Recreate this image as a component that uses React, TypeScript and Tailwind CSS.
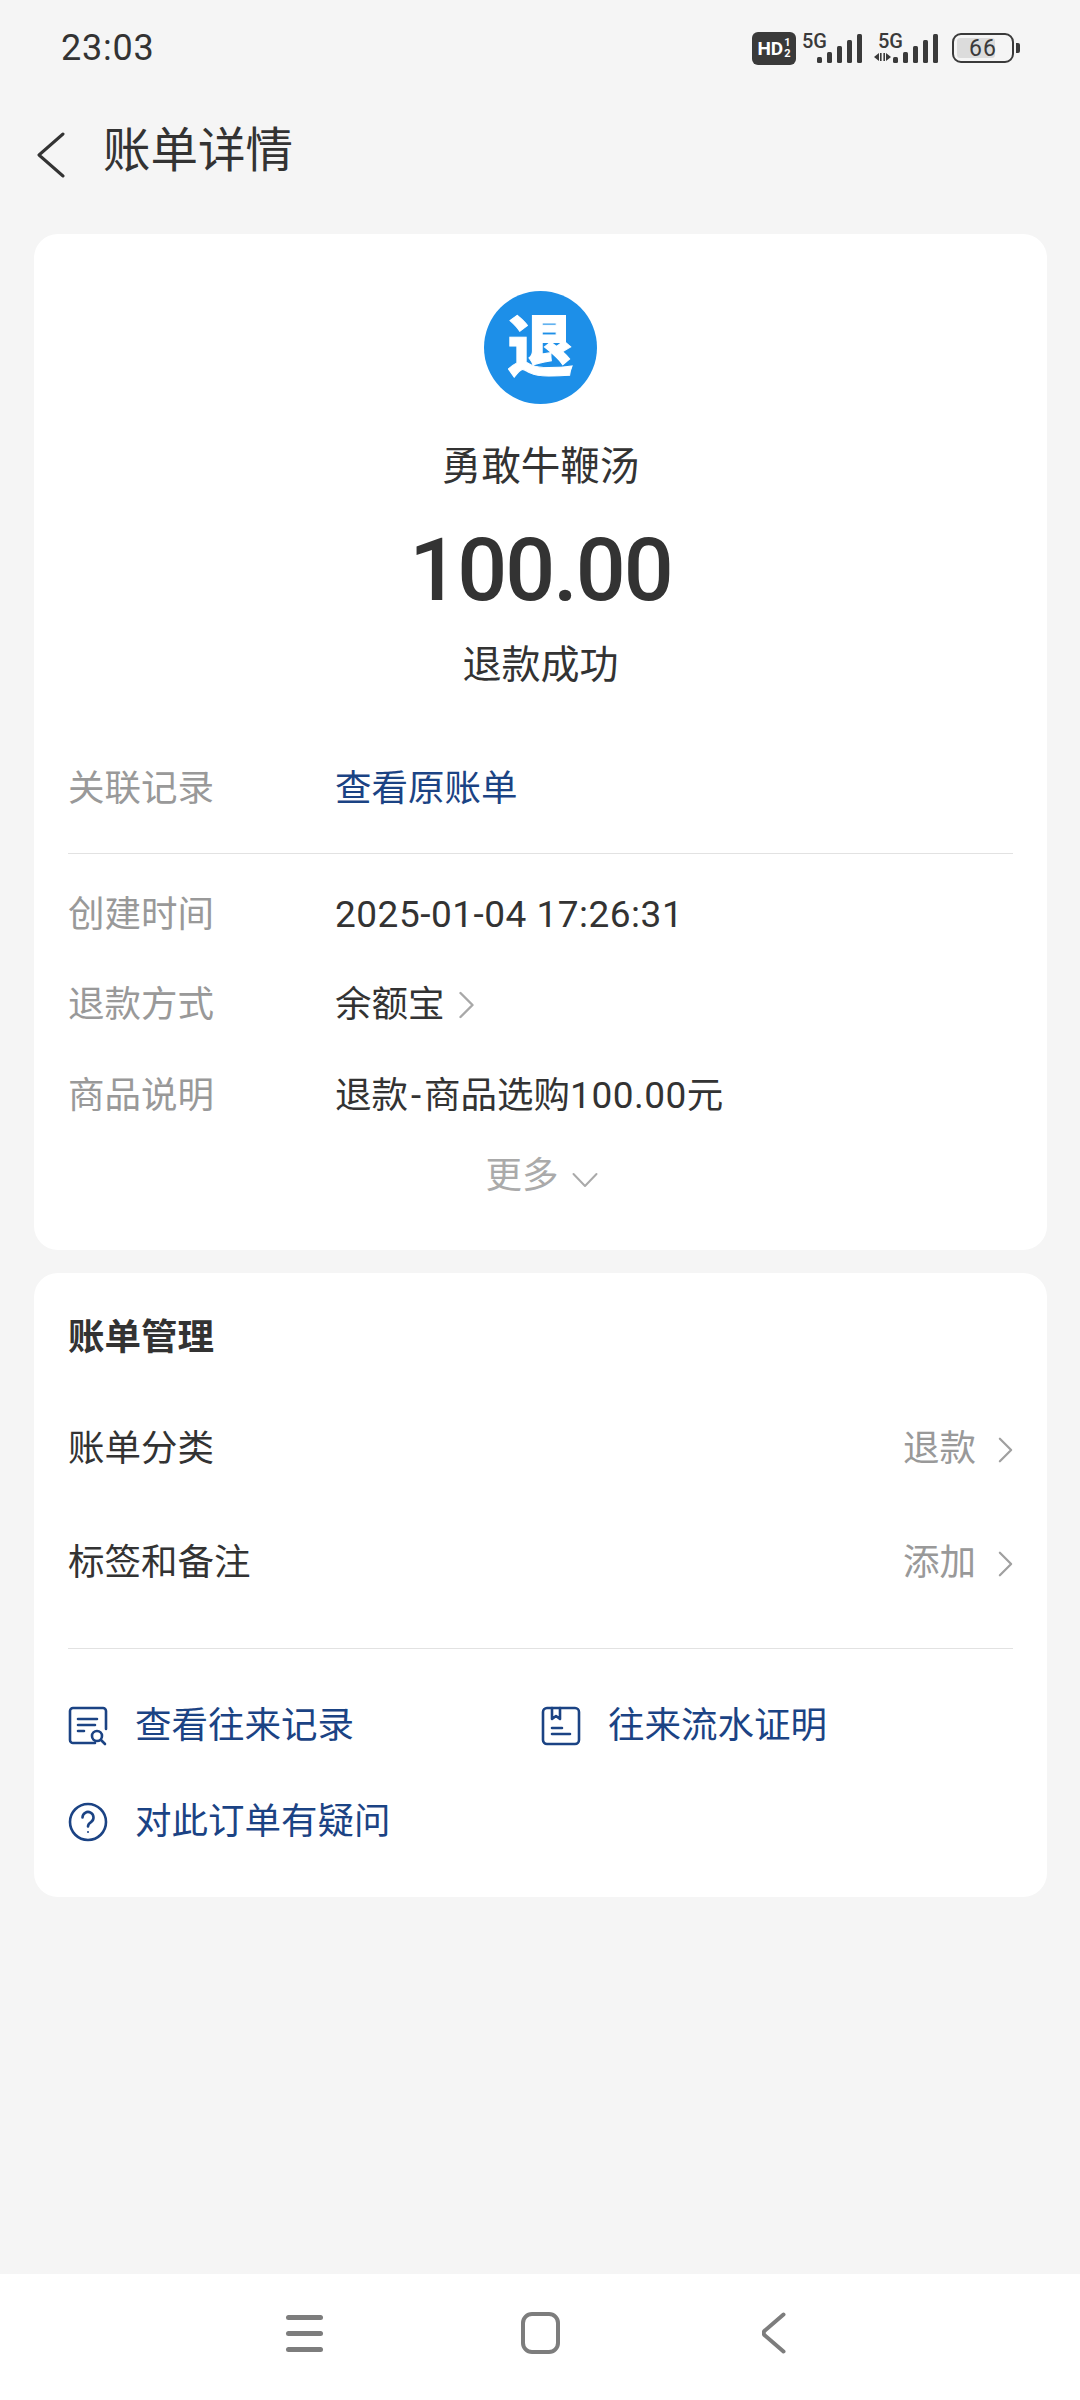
import React from "react";

const cjk = "font-['Roboto','Noto_Sans_CJK_SC',sans-serif]";

const Chevron = ({ className }: { className?: string }) => (
  <svg viewBox="0 0 16 28" fill="none" className={className}>
    <path d="M2 2l12 12L2 26" stroke="currentColor" strokeWidth="2.4" strokeLinecap="round" strokeLinejoin="round" />
  </svg>
);

const Bars = () => (
  <svg width="45" height="29" viewBox="0 0 45 29" fill="#3a3a3a">
    <rect x="0" y="23" width="5" height="6" rx="1.5" />
    <rect x="10" y="18" width="5" height="11" rx="1.5" />
    <rect x="20" y="12" width="5" height="17" rx="1.5" />
    <rect x="30" y="6" width="5" height="23" rx="1.5" />
    <rect x="40" y="0" width="5" height="29" rx="1.5" />
  </svg>
);

const FiveG = ({ className }: { className?: string }) => (
  <span className={`absolute top-0 text-[20px] leading-[17px] font-medium font-['Roboto',sans-serif] text-[#3a3a3a] ${className ?? ""}`}>5G</span>
);

const StatusBar = () => (
  <div className="h-[96px] pl-[61px] pr-[60px] flex items-center justify-between text-[#333]">
    <span className="text-[36px] font-normal font-['Roboto',sans-serif] tracking-[0.8px]">23:03</span>
    <div className="flex items-center">
      <div className="w-[44px] h-[33px] rounded-[6px] bg-[#3a3a3a] text-white flex items-center justify-center font-['Roboto',sans-serif] font-bold leading-none">
        <span className="text-[19px]">HD</span>
        <span className="text-[11px] flex flex-col items-center ml-[1px]">
          <span>1</span>
          <span>2</span>
        </span>
      </div>
      <div className="relative w-[60px] h-[30px] ml-[6px]">
        <FiveG className="left-0" />
        <div className="absolute right-0 bottom-0 flex">
          <Bars />
        </div>
      </div>
      <div className="relative w-[64px] h-[30px] ml-[12px]">
        <FiveG className="left-[4px]" />
        <svg width="17" height="10" viewBox="0 0 17 10" fill="#3a3a3a" className="absolute left-0 bottom-[1px]">
          <path d="M0 5l5-4v8zM6 1h1.6v8H6zM9.4 1H11v8H9.4zM12 1l5 4-5 4z" />
        </svg>
        <div className="absolute right-0 bottom-0 flex">
          <Bars />
        </div>
      </div>
      <div className="ml-[14px] flex items-center">
        <div className="relative w-[62px] h-[30px] rounded-[9px] border-[2.5px] border-[#3a3a3a] overflow-hidden flex items-center justify-center">
          <div className="absolute left-[3px] top-[3px] bottom-[3px] w-[38px] rounded-[3px] bg-[#dcdcdc]" />
          <span className="relative text-[23px] leading-none font-['Roboto',sans-serif] text-[#3a3a3a] tracking-[1px]">66</span>
        </div>
        <div className="w-[4px] h-[10px] ml-[2px] rounded-r-[2px] bg-[#3a3a3a]" />
      </div>
    </div>
  </div>
);

const Row = ({ label, children }: { label: string; children: React.ReactNode }) => (
  <div className="flex items-center h-[90px] text-[36.5px]">
    <span className="w-[267px] text-[#999]">{label}</span>
    {children}
  </div>
);

const MenuRow = ({ label, value }: { label: string; value: string }) => (
  <div className="flex items-center justify-between h-[113px] text-[36.5px]">
    <span className="text-[#333]">{label}</span>
    <span className="flex items-center text-[#999]">
      {value}
      <Chevron className="w-[15px] h-[28px] ml-[22px] text-[#a0a0a0]" />
    </span>
  </div>
);

const LinkItem = ({ icon, label, className }: { icon: React.ReactNode; label: string; className?: string }) => (
  <div className={`flex items-center h-[96px] text-[36.5px] text-[#1b4384] ${className ?? ""}`}>
    <span className="w-[67px] shrink-0 flex">{icon}</span>
    {label}
  </div>
);

const RecordIcon = () => (
  <svg width="40" height="40" viewBox="0 0 40 40" fill="none" stroke="#1b4384" strokeWidth="2.6" strokeLinecap="round" strokeLinejoin="round">
    <path d="M27 37H5a3 3 0 0 1-3-3V5a3 3 0 0 1 3-3h30a3 3 0 0 1 3 3v18" />
    <path d="M10 13h19M10 19h17M10 25h6" />
    <circle cx="29" cy="30" r="5" />
    <path d="M33 34l4 4" />
  </svg>
);

const ProofIcon = () => (
  <svg width="40" height="40" viewBox="0 0 40 40" fill="none" stroke="#1b4384" strokeWidth="2.6" strokeLinecap="round" strokeLinejoin="round">
    <rect x="2" y="2" width="36" height="36" rx="4" />
    <path d="M11 2v11l4-3 4 3V2" />
    <path d="M11 22h10M11 28h18" />
  </svg>
);

const QuestionIcon = () => (
  <svg width="40" height="40" viewBox="0 0 40 40" fill="none" stroke="#1b4384" strokeWidth="2.6" strokeLinecap="round">
    <circle cx="20" cy="20" r="18" />
    <path d="M14.5 15.5a5.5 5.5 0 1 1 8.5 4.6c-2 1.3-3 2.2-3 4.4" />
    <circle cx="20" cy="30" r="1" fill="#1b4384" stroke="none" />
  </svg>
);

const BottomNav = () => (
  <div className="mt-auto h-[126px] bg-white flex items-start pt-[38px]">
    <div className="pl-[286px] flex items-center">
      <div className="w-[37px] h-[37px] flex flex-col justify-between">
        <div className="h-[5px] rounded-full bg-[#7d7d7d]" />
        <div className="h-[5px] rounded-full bg-[#7d7d7d]" />
        <div className="h-[5px] rounded-full bg-[#7d7d7d]" />
      </div>
      <div className="ml-[198px] w-[39px] h-[42px] rounded-[11px] border-[4px] border-[#7d7d7d]" />
      <svg width="24" height="42" viewBox="0 0 24 42" fill="none" className="ml-[202px]">
        <path d="M21.5 2.5L3 18.5a3 3 0 0 0 0 5l18.5 16" stroke="#7d7d7d" strokeWidth="4" strokeLinecap="round" />
      </svg>
    </div>
  </div>
);

export default function App() {
  return (
    <div className={`w-[1080px] h-[2400px] bg-[#f5f5f5] flex flex-col ${cjk}`}>
      <StatusBar />

      <div className="h-[108px] pl-[36px] flex items-center text-[#333]">
        <svg width="30" height="46" viewBox="0 0 30 46" fill="none" className="mt-[9px]">
          <path d="M27 2L3 23l24 21" stroke="#333" strokeWidth="3" strokeLinecap="round" strokeLinejoin="round" />
        </svg>
        <span className="ml-[37px] mt-[3px] text-[47.5px]">账单详情</span>
      </div>

      <div className="ml-[34px] mr-[33px] mt-[30px] h-[1016px] rounded-[24px] bg-white px-[34px] pt-[57px]">
        <div className="flex flex-col items-center text-[#333]">
          <div className="w-[113px] h-[113px] rounded-full bg-[#1d8fe8] text-white text-[66px] font-black leading-none flex items-center justify-center [-webkit-text-stroke:1px_white]">
            退
          </div>
          <div className="mt-[38px] text-[39.5px] leading-[50px]">勇敢牛鞭汤</div>
          <div className="mt-[28px] text-[88px] leading-[100px] font-medium font-['Roboto',sans-serif] tracking-[-2px]">100.00</div>
          <div className="mt-[20px] text-[39px] leading-[50px]">退款成功</div>
        </div>

        <div className="mt-[54px] flex items-center h-[90px] text-[36.5px]">
          <span className="w-[267px] text-[#999]">关联记录</span>
          <span className="text-[#1b4384]">查看原账单</span>
        </div>
        <div className="mt-[19px] h-px bg-[#e2e2e2]" />

        <div className="mt-[16px]">
          <Row label="创建时间">
            <span className="text-[#333] text-[37px] tracking-[0.5px]">2025-01-04 17:26:31</span>
          </Row>
          <Row label="退款方式">
            <span className="text-[#333]">余额宝</span>
            <Chevron className="w-[17px] h-[28px] ml-[13px] text-[#a8a8a8]" />
          </Row>
          <div className="pt-[1px]">
            <Row label="商品说明">
              <span className="text-[#333]">
                退款<span className="mx-[3px]">-</span>商品选购<span className="text-[37px] tracking-[0.5px]">100.00</span>元
              </span>
            </Row>
          </div>
        </div>
        <div className="flex items-center justify-center text-[36.5px] text-[#aaa] h-[60px] mt-[5px] pl-[2px]">
          更多
          <svg width="26" height="16" viewBox="0 0 26 16" fill="none" className="ml-[13px] mt-[8px]">
            <path d="M1.5 2L13 14 24.5 2" stroke="#aaa" strokeWidth="2" strokeLinecap="round" strokeLinejoin="round" />
          </svg>
        </div>
      </div>

      <div className="ml-[34px] mr-[33px] mt-[23px] h-[624px] rounded-[24px] bg-white px-[34px] pt-[39px]">
        <div className="text-[36.5px] leading-[52px] font-bold text-[#333]">账单管理</div>
        <div className="mt-[29px]">
          <MenuRow label="账单分类" value="退款" />
          <div className="pt-[1px]">
            <MenuRow label="标签和备注" value="添加" />
          </div>
        </div>
        <div className="mt-[28px] h-px bg-[#e2e2e2]" />
        <div className="mt-[29px] grid grid-cols-[473px_1fr]">
          <LinkItem icon={<RecordIcon />} label="查看往来记录" />
          <LinkItem icon={<ProofIcon />} label="往来流水证明" />
          <LinkItem icon={<QuestionIcon />} label="对此订单有疑问" className="col-span-2" />
        </div>
      </div>

      <BottomNav />
    </div>
  );
}
